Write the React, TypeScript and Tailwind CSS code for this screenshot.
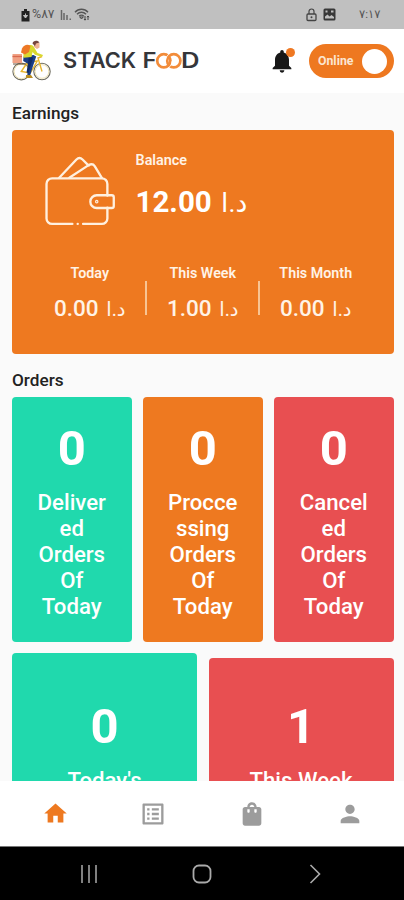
import React from "react";
import { MdHome, MdListAlt, MdNotifications, MdPerson, MdShoppingBag } from "react-icons/md";

function StatusBar() {
  return (
    <div className="flex h-[29px] shrink-0 items-center bg-[#c0c0c0] pl-[21px] pr-[23px] text-[#555]">
      <svg width="9" height="13" viewBox="0 0 9 13" className="mt-px">
        <path d="M3 0h3v2h2.500v10.500h-8V2H3z" fill="#222" />
        <path d="M4.500 4.500v4M2.500 6.500L4.500 9l2-2.500z" stroke="#c0c0c0" strokeWidth="1" fill="#c0c0c0" />
      </svg>
      <span className="ml-[2px] w-[25px] text-[12.500px] leading-none">%٨٧</span>
      <svg width="13" height="12" viewBox="0 0 13 12" className="ml-[3px]">
        <path d="M1.500 1v10M4 4v7M7 6v5" stroke="#666" strokeWidth="1.500" />
        <path d="M9.500 10.200h1.500" stroke="#666" strokeWidth="1.500" />
      </svg>
      <svg width="17" height="14" viewBox="0 0 17 14" className="ml-px">
        <path d="M1 4.200C4.500.3 10.500.3 14 4.200M3 6.200c2.500-2.600 6.500-2.600 9 0M5.200 8.200c1.300-1.400 3.300-1.400 4.600 0" fill="none" stroke="#555" strokeWidth="1.400" />
        <path d="M7.500 11l-1.700-2h3.400zM11 8v4M10 11l1 1.200 1-1.200M14 12V8M13 9.200l1-1.200 1 1.200" fill="none" stroke="#444" strokeWidth="1" />
      </svg>
      <div className="grow" />
      <svg width="11" height="14" viewBox="0 0 11 14">
        <path d="M3 6V3.500a2.500 2.500 0 0 1 5 0V6" fill="none" stroke="#444" strokeWidth="1.200" />
        <rect x="1" y="6" width="9" height="6.500" rx="1" fill="none" stroke="#444" strokeWidth="1.300" />
        <circle cx="5.500" cy="9.200" r="1" fill="#444" />
      </svg>
      <svg width="13" height="13" viewBox="0 0 13 13" className="ml-[6px]">
        <rect x=".5" y=".5" width="12" height="12" rx="1.500" fill="#383838" />
        <path d="M2 10.500V8.500l2.500-2 2 2 2-1.500 2.500 2v1.500z" fill="#c0c0c0" />
        <path d="M2.500 2.500h2v2h-2zM8 2.500h2.500v2H8z" fill="#c0c0c0" />
      </svg>
      <span className="ml-[23px] w-[22px] text-[11.500px] leading-none">٧:١٧</span>
    </div>
  );
}

function Rider() {
  return (
    <svg width="40" height="42" viewBox="0 0 40 42">
      <g fill="none" stroke="#6d6b5f" strokeWidth="1.100">
        <circle cx="10.300" cy="31.500" r="8.400" />
        <circle cx="31" cy="31.500" r="8.200" />
      </g>
      <g fill="none" stroke="#eadba0" strokeWidth=".8">
        <circle cx="10.300" cy="31.500" r="7.200" />
        <circle cx="31" cy="31.500" r="6.800" />
      </g>
      <path d="M10.300 31.500l6-9 10-1.500-7 12zM31 31.500L27 18l4-1.500M16 22l3.500 11" fill="none" stroke="#e8b52c" strokeWidth="1.400" />
      <rect x="1.500" y="14" width="9.500" height="9" fill="#f0a184" />
      <path d="M1.500 16.500h9.500" stroke="#d9694e" strokeWidth="1.300" />
      <path d="M2 24h13" stroke="#69533d" strokeWidth="1" />
      <path d="M12.500 16.500l10-1.500 2.700 1.500-3.200 9.500-3.300 11h-2.500l1-13-5-3z" fill="#193d86" />
      <path d="M18 15l4 3-2.500 8-2 7-2-.5 1.500-9z" fill="#102b67" />
      <path d="M15 35h5l2 3h-7z" fill="#b98d20" />
      <path d="M16 6.500c4-2.500 6-1.500 7.500 1.500l3 5 5.500 2-1 2-7-2.300-2.500-2.700-1 5-8 .8c-.5-5 .5-8.800 3.500-11.300z" fill="#d9d92f" />
      <path d="M11 8.500c2-4 6-4.500 8.500-2.500l-1.500 6-4 2.500-4-2z" fill="#ed7825" />
      <path d="M23 3h5.500v4.500L26 9l-3-2z" fill="#efb395" />
      <path d="M21.500 3.500C22 0 27 0 28.500 2.500L25 3.500l-1 2.500z" fill="#74453d" />
    </svg>
  );
}

function Header() {
  return (
    <header className="flex h-16 shrink-0 items-center bg-white pl-[11px] pr-[10.500px]">
      <Rider />
      <svg width="140" height="24" viewBox="0 0 140 24" className="ml-[11px] font-[Inter,sans-serif]">
        <g fill="#35363a" fontSize="20.800" fontWeight="600">
          <text x="1" y="19.300" textLength="73" lengthAdjust="spacingAndGlyphs">STACK</text>
          <text x="80.500" y="19.300" textLength="14" lengthAdjust="spacingAndGlyphs">F</text>
          <text x="119" y="19.300" textLength="18.500" lengthAdjust="spacingAndGlyphs">D</text>
        </g>
        <g fill="none" stroke="#f28c3a" strokeWidth="2.700">
          <circle cx="101.800" cy="11.800" r="6.600" />
          <circle cx="111.800" cy="11.800" r="6.600" />
        </g>
        <path d="M103.500 11.500a8.300 8.300 0 0 1 3.200-6.300M110.100 12.200a8.300 8.300 0 0 1-3.200 6.300" fill="none" stroke="#fff" strokeWidth=".8" />
      </svg>
      <div className="grow" />
      <div className="relative mr-[13px] h-7 w-7">
        <MdNotifications size={28} color="#171717" />
        <span className="absolute right-px top-px h-[9px] w-[9px] rounded-full bg-[#ef7822]" />
      </div>
      <div className="flex h-[34px] w-[84.500px] items-center justify-between rounded-full bg-[#ee7820] pl-[9px] pr-[6.500px]">
        <span className="text-[12.300px] font-bold text-[#fbe6d2]">Online</span>
        <span className="h-[25px] w-[25px] rounded-full bg-white" />
      </div>
    </header>
  );
}

function Wallet() {
  return (
    <svg width="71" height="71" viewBox="0 0 70 70" fill="none" stroke="#fff0df" strokeWidth="2.300" strokeLinecap="round" strokeLinejoin="round">
      <path d="M27 67H7a5.500 5.500 0 0 1-5.500-5.500v-34A5.500 5.500 0 0 1 7 22h49a5.500 5.500 0 0 1 5.500 5.500V39M61.500 51v10.500A5.500 5.500 0 0 1 56 67H37.500" />
      <path d="M51 38.700h14.800q2 0 2 2v8.600q0 2-2 2H51a6.300 6.300 0 0 1 0-12.600z" />
      <path d="M14 21.500L31 3.500q3-3 6 0l6 6M24 21.500L43 9q4-2 6 1l7 11.500" />
      <circle cx="51" cy="45" r=".6" />
      <path d="M32.200 67h.1" />
    </svg>
  );
}

function Stat({ label, value }: { label: string; value: string }) {
  return (
    <div className="flex w-[111px] flex-col items-center">
      <span className="whitespace-nowrap text-[14.300px] font-semibold leading-4">{label}</span>
      <span className="mt-[14px] whitespace-nowrap text-[22.500px] font-medium leading-[26px]">
        {value} <span dir="rtl" className="ml-[2px] inline-block text-[19.500px] font-normal leading-none">د.ا</span>
      </span>
    </div>
  );
}

function Earnings() {
  return (
    <section className="h-[223.500px] shrink-0 rounded bg-[#ee7920] text-[#fff3e6]">
      <div className="flex h-[97px] pl-[32.500px] pt-[23px]">
        <div className="pt-[3px]"><Wallet /></div>
        <div className="ml-[20px] flex flex-col">
          <span className="text-[14.400px] font-semibold leading-4">Balance</span>
          <span className="mt-[16px] whitespace-nowrap text-[29.500px] font-bold leading-[34px] text-white">
            12.00 <span dir="rtl" className="ml-[2px] inline-block text-[26.500px] font-normal leading-none">د.ا</span>
          </span>
        </div>
      </div>
      <div className="mt-[38px] flex justify-center">
        <Stat label="Today" value="0.00" />
        <span className="mt-[16px] h-[34px] w-[2px] bg-[#f8c493]" />
        <Stat label="This Week" value="1.00" />
        <span className="mt-[16px] h-[34px] w-[2px] bg-[#f8c493]" />
        <Stat label="This Month" value="0.00" />
      </div>
    </section>
  );
}

const daily = [
  { color: "bg-[#20d9ad]", lines: ["Deliver", "ed", "Orders", "Of", "Today"] },
  { color: "bg-[#ee7920]", lines: ["Procce", "ssing", "Orders", "Of", "Today"] },
  { color: "bg-[#e84f51]", lines: ["Cancel", "ed", "Orders", "Of", "Today"] },
];

function DailyOrders() {
  return (
    <div className="grid grid-cols-3 gap-[11.500px]">
      {daily.map((card) => (
        <div key={card.color} className={`flex h-[245px] flex-col items-center rounded pt-[24px] text-white ${card.color}`}>
          <span className="text-[49px] font-bold leading-[56px]">0</span>
          <span className="mt-[12px] text-center text-[22.200px] font-medium leading-[26px]">
            {card.lines.map((line) => (
              <span key={line} className="block">{line}</span>
            ))}
          </span>
        </div>
      ))}
    </div>
  );
}

function TotalOrders() {
  return (
    <div className="mt-[11px] grid grid-cols-2 items-end gap-[11.500px] text-center text-white">
      <div className="flex h-[160px] flex-col rounded bg-[#20d9ad] pt-[46px]">
        <span className="text-[49px] font-bold leading-[56px]">0</span>
        <span className="mt-[12px] text-[22.200px] font-medium leading-[26px]">Today's</span>
      </div>
      <div className="flex h-[155px] flex-col rounded bg-[#e84f51] pt-[41px]">
        <span className="text-[49px] font-bold leading-[56px]">1</span>
        <span className="mt-[12px] text-[22.200px] font-medium leading-[26px]">This Week</span>
      </div>
    </div>
  );
}

function BottomNav() {
  return (
    <nav className="grid h-[66px] shrink-0 grid-cols-4 items-center justify-items-center border-b border-[#777] bg-white pl-[6px] pr-[5px] text-[#9c9c9c]">
      <MdHome size={27} color="#ee7920" />
      <MdListAlt size={28} />
      <MdShoppingBag size={28} />
      <MdPerson size={28} />
    </nav>
  );
}

function SystemNav() {
  return (
    <div className="flex h-[53px] shrink-0 items-center bg-black pl-[80px]">
      <svg width="18" height="18" viewBox="0 0 18 18" stroke="#aaa" strokeWidth="1.500">
        <path d="M2 0v18M9 0v18M16 0v18" />
      </svg>
      <svg width="20" height="20" viewBox="0 0 20 20" fill="none" stroke="#aaa" strokeWidth="1.800" className="ml-[94px]">
        <rect x="1.500" y="1.500" width="17" height="17" rx="5.500" />
      </svg>
      <svg width="12" height="20" viewBox="0 0 12 20" fill="none" stroke="#aaa" strokeWidth="1.600" className="ml-[97px]">
        <path d="M1.500 1l9 9-9 9" />
      </svg>
    </div>
  );
}

export default function App() {
  return (
    <div className="flex h-[900px] w-[404px] flex-col overflow-hidden bg-[#fafafa] font-[Roboto,'DejaVu_Sans',sans-serif]">
      <StatusBar />
      <Header />
      <main className="flex min-h-0 flex-1 flex-col overflow-hidden pl-3 pr-[10.500px]">
        <h2 className="mb-[7px] mt-[11px] text-[17.200px] font-medium leading-[19px] text-[#222]">Earnings</h2>
        <Earnings />
        <h2 className="mb-[7px] mt-[17.500px] text-[17.200px] font-medium leading-[19px] text-[#222]">Orders</h2>
        <DailyOrders />
        <TotalOrders />
      </main>
      <BottomNav />
      <SystemNav />
    </div>
  );
}
